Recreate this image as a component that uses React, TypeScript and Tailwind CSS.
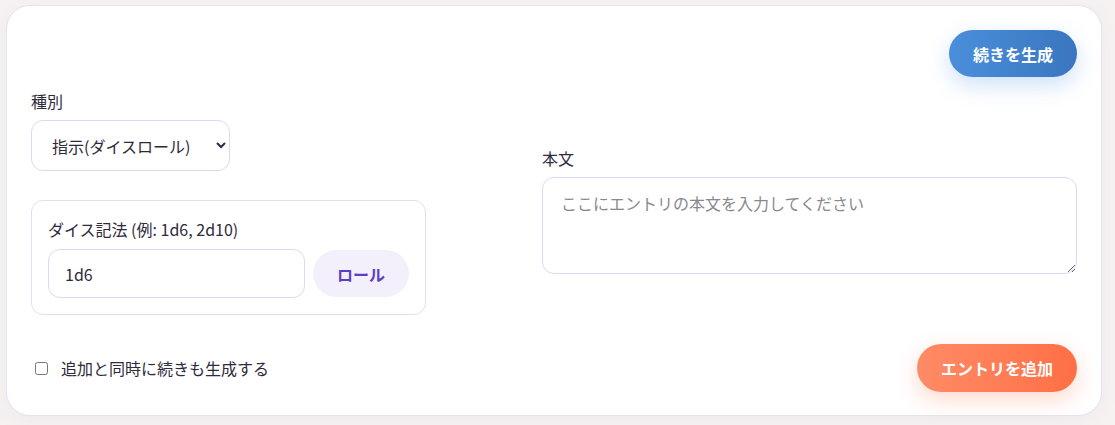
import React from "react";

export default function App() {
  const font = { fontFamily: '"Noto Sans CJK JP", "Noto Sans", sans-serif' };
  return (
    <div className="min-h-[425px] w-full bg-[#f6f2f2] pt-[5px] pl-[6px]" style={font}>
      <div className="w-[1096px] h-[411px] rounded-[24px] border border-[#e8e2ee] bg-white px-6 pt-6 pb-6 shadow-[0_4px_20px_rgba(120,90,140,0.06)] flex flex-col text-[#2e2a3c]">
        <div className="flex justify-end">
          <button className="h-[47px] w-[128px] rounded-full bg-gradient-to-r from-[#4a8fdc] to-[#3a76bf] text-white text-[16px] font-bold shadow-[0_8px_22px_rgba(74,144,226,0.28)]">
            続きを生成
          </button>
        </div>
        <div className="mt-[12px] grid grid-cols-[395px_535px] justify-between items-start">
          <div className="flex flex-col">
            <label className="text-[16px] leading-[24px] mb-[7px]">種別</label>
            <select className="w-[199px] h-[51px] rounded-[12px] border border-[#ddd8f5] bg-white pl-4 pr-1 text-[16px] text-[#2e2a3c] outline-none">
              <option>指示(ダイスロール)</option>
            </select>
            <div className="mt-[29px] rounded-[12px] border border-[#e3def6] p-4">
              <div className="text-[16px] leading-[24px] mb-2">ダイス記法 (例: 1d6, 2d10)</div>
              <div className="flex items-center gap-2">
                <input
                  defaultValue="1d6"
                  className="flex-1 h-[49px] rounded-[12px] border border-[#ddd8f5] px-4 text-[16px] text-[#2e2a3c] outline-none"
                />
                <button className="h-[47px] w-[96px] rounded-full bg-[#f3f0fc] text-[#5b3fc2] text-[16px] font-bold">
                  ロール
                </button>
              </div>
            </div>
          </div>
          <div className="mt-[57px] flex flex-col">
            <label className="text-[16px] leading-[24px] mb-[7px]">本文</label>
            <textarea
              placeholder="ここにエントリの本文を入力してください"
              className="h-[97px] w-full rounded-[12px] border border-[#ddd8f5] px-[18px] py-[13px] text-[16px] leading-[24px] placeholder:text-[#8a8790] outline-none"
            />
          </div>
        </div>
        <div className="mt-[29px] flex items-center justify-between">
          <label className="flex items-center gap-[13px] pl-1 text-[16px]">
            <input type="checkbox" className="w-[13px] h-[13px]" />
            追加と同時に続きも生成する
          </label>
          <button className="h-[48px] w-[160px] rounded-full bg-gradient-to-r from-[#ff8b66] to-[#ff6f45] text-white text-[16px] font-bold shadow-[0_8px_22px_rgba(255,120,80,0.28)]">
            エントリを追加
          </button>
        </div>
      </div>
    </div>
  );
}
